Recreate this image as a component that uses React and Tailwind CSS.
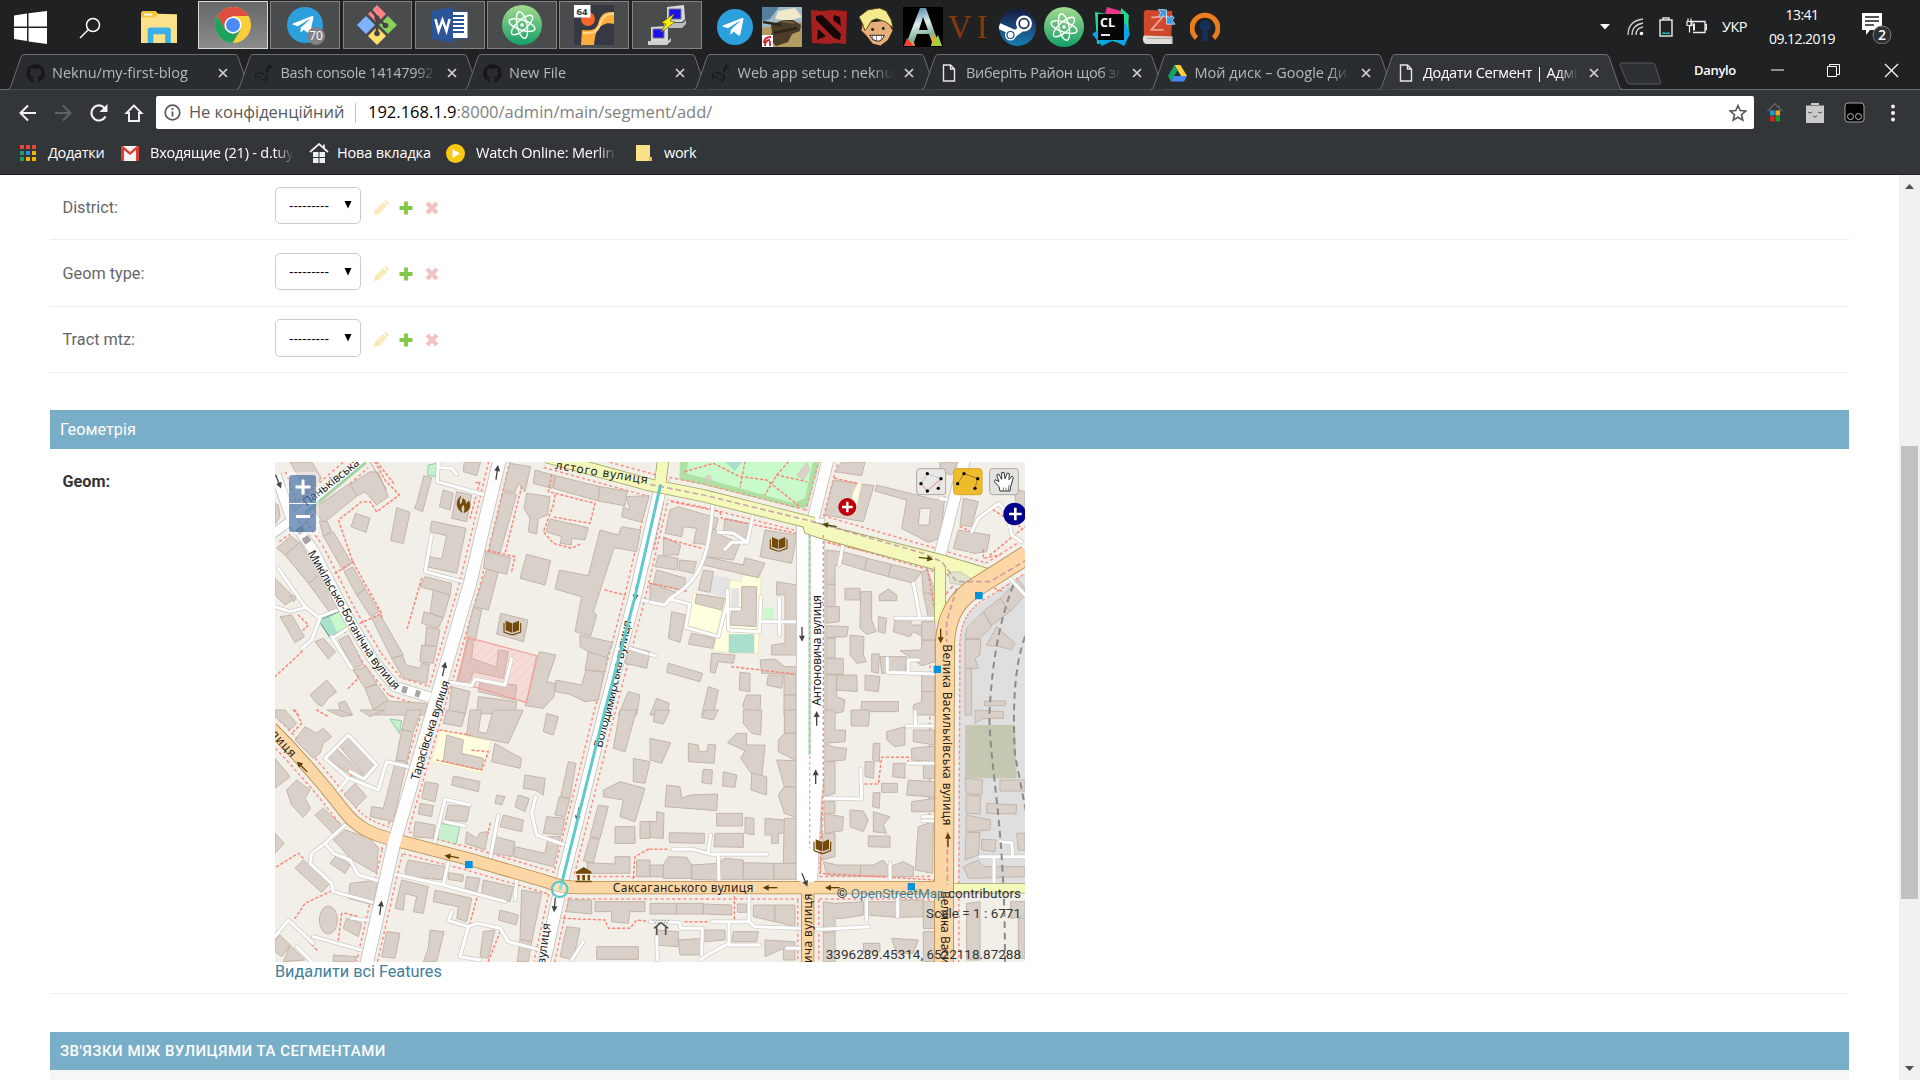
import React from 'react';
import { FaGithub, FaSteamSymbol, FaTelegramPlane } from 'react-icons/fa';

/* ------------------------------------------------------------------ icons */

const Svg = ({ s = 36, vb = '0 0 36 36', className = '', children }) => (
  <svg width={s} height={s} viewBox={vb} className={`block shrink-0 ${className}`} fill="none">
    {children}
  </svg>
);

const Telegram = () => (
  <div className="flex size-9 items-center justify-center rounded-full bg-[#2ca0dc] text-white">
    <FaTelegramPlane size={24} className="mr-1" />
  </div>
);

const Atom = ({ id }) => (
  <Svg s={40} vb="0 0 40 40">
    <defs>
      <linearGradient id={id} x1="0" y1="0" x2="0" y2="1">
        <stop offset="0" stopColor="#a3dc8f" />
        <stop offset="1" stopColor="#14a067" />
      </linearGradient>
    </defs>
    <circle cx="20" cy="20" r="20" fill={`url(#${id})`} />
    <g stroke="#fff" strokeWidth="1.400">
      <ellipse cx="20" cy="20" rx="13.500" ry="5" transform="rotate(18 20 20)" />
      <ellipse cx="20" cy="20" rx="13.500" ry="5" transform="rotate(78 20 20)" />
      <ellipse cx="20" cy="20" rx="13.500" ry="5" transform="rotate(138 20 20)" />
    </g>
    <circle cx="20" cy="20" r="1.800" fill="#fff" />
  </Svg>
);

const Chrome = () => (
  <Svg>
    <circle cx="18" cy="18" r="18" fill="#fbce3c" />
    <path d="M2.400 9A18 18 0 0 1 33.600 9H18L10.200 22.500Z" fill="#dd4d40" />
    <path d="M2.400 9A18 18 0 0 0 17.500 36L25.800 22.500 18 27 10.200 22.500Z" fill="#1fa160" />
    <circle cx="18" cy="18" r="8.600" fill="#fff" />
    <circle cx="18" cy="18" r="7" fill="#4a8af4" />
  </Svg>
);

const Explorer = () => (
  <Svg vb="0 0 36 32" s={37}>
    <path d="M0 2 1.500 0H14l2.500 2.500L35 3v28H0Z" fill="#fde08a" />
    <path d="M0 2 1.500 0H14l2.500 2.500L14 6H0Z" fill="#f5c636" />
    <path d="M3 2.500h8v1.800H3Z" fill="#fff" />
    <path d="M6.500 31V18.500q0-2.500 2.500-2.500h17.500q2.500 0 2.500 2.500V31h-5.500v-8.500H12V31Z" fill="#3bb0e8" />
  </Svg>
);

const GitBash = () => (
  <Svg s={40} vb="0 0 40 40">
    <path d="m20 0 9 9-9 9-9-9Z" fill="#f98284" />
    <path d="m9 11 9 9-9 9-9-9Z" fill="#80b3ff" />
    <path d="m31 11 9 9-9 9-9-9Z" fill="#87d05c" />
    <path d="m20 22 9 9-9 9-9-9Z" fill="#ffe06e" />
    <path d="M14 5 20 12v16M20 13l8 7" stroke="#454547" strokeWidth="2.600" />
    <circle cx="20" cy="13" r="2.600" fill="#454547" />
    <circle cx="28.500" cy="20.500" r="2.800" fill="#454547" />
    <circle cx="20" cy="28.500" r="2.800" fill="#454547" />
  </Svg>
);

const Word = () => (
  <Svg>
    <path d="M19 4.500h17v27H19Z" fill="#fff" stroke="#2a5599" />
    <path d="M20 9h12M20 13h12M20 17h12M20 21h12M20 25h12" stroke="#2a5599" strokeWidth="1.800" />
    <path d="M0 4 21 0v36L0 32Z" fill="#2a5599" />
    <path d="m3.500 12 3 12 4-11 4 11 3-12" stroke="#fff" strokeWidth="2.500" />
  </Svg>
);

const JetBrains = () => (
  <Svg s={40} vb="0 0 40 40">
    <rect width="40" height="40" rx="1" fill="#363944" />
    <circle cx="14" cy="14" r="7" fill="#f4672b" />
    <path d="M40 7C28 6 26 12 24 19 22 25 17 26 8 25L7 40h13c1-13 4-18 9-20 3-2 7-2 11-1Z" fill="#fbae3c" />
    <path d="M40 9C29 8 27 16 25 22 22 28 17 28 9 28" stroke="#ffd98c" strokeWidth="2" />
    <rect width="16.500" height="12.500" fill="#fff" />
    <text x="2.500" y="10" fontSize="9.500" fontWeight="700" fill="#333" fontFamily="Open Sans, sans-serif">64</text>
  </Svg>
);

const Putty = () => (
  <Svg s={40} vb="0 0 40 40">
    <path d="M20 2 37 0l1 14-3 3-15 0Z" fill="#d9d9d9" />
    <path d="M22 4h12v10H22Z" fill="#1b10f0" stroke="#777" />
    <path d="M17 18h19l3-3v4l-4 4H17Z" fill="#bcbcbc" />
    <path d="M4 22 21 21v15H4Z" fill="#d9d9d9" />
    <path d="M6 24h11v9H6Z" fill="#1b10f0" stroke="#777" />
    <path d="M1 36h20l3-3v3l-4 4H1Z" fill="#d1d1cc" />
    <path d="m28 8-14 10 5 1-6 9 15-11-5-1Z" fill="#fff200" stroke="#222" strokeWidth=".5" />
  </Svg>
);

const Tanks = () => (
  <Svg s={40} vb="0 0 40 40">
    <rect width="40" height="40" fill="#9fb9c6" />
    <path d="M0 0h17L8 12 0 14Z" fill="#547f9e" />
    <path d="m16 4 17-3 7 9-13 4-14-2Z" fill="#efe9cb" />
    <path d="M0 21 40 15v25H0Z" fill="#b39a5f" />
    <path d="m9 18 12-5 10 0 8 5-1 6-8 3-4 8-12 4-6-6 2-8Z" fill="#4a3c26" />
    <path d="m1 15 18 3M12 26l23-5" stroke="#2b2418" strokeWidth="2.500" />
    <path d="m20 14 12 2" stroke="#7d6b49" strokeWidth="1.500" />
    <rect y="28" width="11" height="12" fill="#fff" />
    <path d="M2 36q0-6 7-6M3 39q0-6 5-6M8 39v-5" stroke="#cb202b" strokeWidth="1.800" />
  </Svg>
);

const Dota = () => (
  <Svg>
    <path d="m0 1 12 1 7-1 17 1-1 33-10-1-9 1L1 34Z" fill="#a81f20" />
    <path d="m5 7 6-1 19 19-1 6-6-2L5 11ZM23 6l6 2 1 9-8-6ZM7 20l8 7-9 4Z" fill="#160808" />
  </Svg>
);

const Blond = () => (
  <Svg s={39} vb="0 0 36 40">
    <path d="M5 15 32 12l1 8 2 3-5 10-8 6-8-2-7-9-5-5 1-5Z" fill="#e6ae78" stroke="#33231a" />
    <path d="M0 9 9 2 21 0l7 3 5 9 2 8-8-6-9-3-5 2-5 8-2 2-2-6Z" fill="#f5e98e" stroke="#55471e" />
    <path d="M11 28h15q-2 6-7 6t-8-6Z" fill="#fff" stroke="#222" />
    <path d="M14 28v5m4-5v6m5-6v5" stroke="#555" strokeWidth=".7" />
    <circle cx="14" cy="22" r="1.500" fill="#222" />
    <circle cx="25" cy="21" r="1.500" fill="#222" />
  </Svg>
);

const Ark = () => (
  <Svg s={40} vb="0 0 40 40">
    <defs>
      <linearGradient id="ark" x1="0" y1="0" x2=".3" y2="1">
        <stop offset="0" stopColor="#2d6e99" />
        <stop offset=".5" stopColor="#e2eef0" />
        <stop offset=".8" stopColor="#83b69a" />
        <stop offset="1" stopColor="#f2a531" />
      </linearGradient>
    </defs>
    <rect width="40" height="40" fill="#000" />
    <path d="M17 1h6l11 31 5 7H28l1-4-3-8H14l-3 8 1 4H1l4-7Zm3 9-4 13h9Z" fill="url(#ark)" fillRule="evenodd" />
    <path d="m1 39 3-8 7 8Z" fill="#ee4436" />
    <path d="m39 39-4-11-7 11Z" fill="#a6cf3c" />
  </Svg>
);

const Steam = () => (
  <div className="flex size-[37px] items-center justify-center overflow-hidden rounded-full bg-linear-to-b from-[#131b42] to-[#137eb4] text-white">
    <Svg s={37} vb="0 0 37 37">
      <path d="M0 17 16 24M14 26 26 17" stroke="#fff" strokeWidth="6" />
      <circle cx="11.500" cy="26" r="5.500" fill="#fff" />
      <circle cx="11.500" cy="26" r="3.500" stroke="#1b4b84" strokeWidth="1.200" />
      <circle cx="25" cy="14.500" r="8" fill="#fff" />
      <circle cx="25" cy="14.500" r="4.800" fill="#fff" stroke="#1b2f60" strokeWidth="1.700" />
    </Svg>
  </div>
);

const CLion = () => (
  <Svg s={40} vb="0 0 40 40">
    <path d="m4 5 12 2L38 8l-4 30-12-4L6 37Z" fill="#22d88f" />
    <path d="m16 0 17 5-5 8-14-6Z" fill="#ea3989" />
    <path d="m30 1 7 6 1 19-9-12Z" fill="#21d789" />
    <path d="m1 27 10 12 12-6L9 22ZM34 15l5 12-6 12-9-5Z" fill="#0aa4e8" />
    <path d="M7 7h26v26H7Z" fill="#050505" />
    <text x="9" y="20" fontSize="12.500" fontWeight="700" fill="#fff" fontFamily="Open Sans, sans-serif">CL</text>
    <path d="M10 28h9" stroke="#fff" strokeWidth="1.800" />
  </Svg>
);

const Zotero = () => (
  <Svg s={36} vb="0 0 38 38">
    <path d="m6 1 28 1-1 28-29-1V3Z" fill="#d0482b" />
    <path d="m4 28 30 1v8H6q-5-3-2-9Z" fill="#e0dcd8" />
    <path d="M34 29v8M7 31h26" stroke="#a7a19b" />
    <path d="M12 9 24 8 12 22l13 0" stroke="#e9a18f" strokeWidth="2" />
    <path d="m19 0 9 1 0 9-3-3-3 2-2-2 2-3ZM37 16h-9V7l3 2 3-2 2 2-2 3Z" fill="#3f9be0" stroke="#cfe9fb" strokeWidth=".8" />
  </Svg>
);

const Keyhole = () => (
  <Svg s={30} vb="0 0 30 30">
    <path d="M6.500 26A13 13 0 1 1 23.500 26" stroke="#ec7d1f" strokeWidth="5" />
    <circle cx="15" cy="14" r="5.500" fill="#15315b" />
    <path d="M13 17h4l1.500 12h-7Z" fill="#15315b" />
  </Svg>
);

const FileIcon = () => (
  <Svg s={18} vb="0 0 18 18">
    <path d="M3.500 1h7l4 4v12h-11ZM10.500 1v4h4" stroke="#e6e6e6" strokeWidth="1.400" />
  </Svg>
);

const Snake = () => (
  <Svg s={20} vb="0 0 20 20">
    <path d="M3 10Q1 13 2 16M4 9l6 2M12 11q2 5-1 8M16 0l-2 5q-3 3 0 4M14 6l4-3" stroke="#131516" strokeWidth="1.200" />
    <circle cx="5" cy="14" r="1" fill="#131516" />
    <path d="M7 17q3 1 4-2" stroke="#131516" />
  </Svg>
);

const Drive = () => (
  <Svg s={19} vb="0 0 19 17">
    <path d="M6.500 0h6L19 11h-6Z" fill="#fdcd40" />
    <path d="M6.500 0 0 11l3 5.500L9.500 5.500Z" fill="#11a35f" />
    <path d="M3 16.500 6 11h13l-3 5.500Z" fill="#4688f4" />
  </Svg>
);

/* ---------------------------------------------------------------- taskbar */

const RUNNING = [
  { key: 'chrome', icon: <Chrome />, active: true },
  { key: 'telegram', icon: <Telegram />, badge: '70' },
  { key: 'git', icon: <GitBash /> },
  { key: 'word', icon: <Word /> },
  { key: 'atom', icon: <Atom id="atomA" /> },
  { key: 'jb', icon: <JetBrains /> },
  { key: 'putty', icon: <Putty /> },
];

const PINNED = [
  <Telegram />,
  <Tanks />,
  <Dota />,
  <Blond />,
  <Ark />,
  <span className="font-['Liberation_Serif',serif] text-[33px] leading-none tracking-[5px] text-[#843a0b]">VI</span>,
  <Steam />,
  <Atom id="atomB" />,
  <CLion />,
  <Zotero />,
  <Keyhole />,
];

function Taskbar() {
  return (
    <div className="flex h-[53px] items-start bg-[#1f2123] text-white">
      <div className="flex w-[198px] items-center pt-[9px] pl-3.5">
        <Svg s={33} vb="0 0 33 33">
          <path d="m0 4.500 13-2v13H0ZM14.500 2.300 33 0v15.500H14.500ZM0 17h13v13L0 28ZM14.500 17H33v16l-18.500-2.500Z" fill="#fff" />
        </Svg>
        <Svg s={22} vb="0 0 22 22" className="ml-8">
          <circle cx="14" cy="8" r="6.500" stroke="#fff" strokeWidth="1.500" />
          <path d="M9.500 12.500 1 21" stroke="#fff" strokeWidth="1.500" />
        </Svg>
        <div className="ml-10">
          <Explorer />
        </div>
      </div>
      <div className="flex gap-[2.500px] pt-px">
        {RUNNING.map((r) => (
          <div
            key={r.key}
            className={`relative flex h-12 w-[69.800px] items-center justify-center border ${
              r.active ? 'border-[#d8d8d8] bg-linear-to-b from-[#666769] to-[#8b8c8e]' : 'border-[#838485] bg-[#4a4b4d]'
            }`}
          >
            {r.icon}
            {r.badge && (
              <span className="absolute right-[14px] bottom-[3px] flex size-[18px] items-center justify-center rounded-full bg-[#808285] font-['Open_Sans',sans-serif] text-[12px]">
                {r.badge}
              </span>
            )}
          </div>
        ))}
      </div>
      <div className="ml-[10px] flex pt-[7px]">
        {PINNED.map((icon, i) => (
          <div key={i} className="flex h-10 w-[47px] items-center justify-center">
            {icon}
          </div>
        ))}
      </div>
      <div className="ml-auto flex h-[53px] items-center font-['Open_Sans',sans-serif] text-[14.500px]">
        <Svg s={10} vb="0 0 10 6">
          <path d="M0 0h10L5 5.500Z" fill="#fff" />
        </Svg>
        <Svg s={18} vb="0 0 18 18" className="ml-[17px]">
          <path d="M1 17Q1 3 16 1M5 17Q5 7 16 5M9 17q0-7 7-8" stroke="#cfcfcf" strokeWidth="1.300" />
          <circle cx="14.500" cy="15.500" r="1.800" fill="#fff" />
        </Svg>
        <Svg s={20} vb="0 0 20 20" className="ml-[11px]">
          <path d="M7 1h6v2H7ZM4 3h12v16H4Z" stroke="#e0e0e0" strokeWidth="1.500" />
          <path d="m6 16 2-1 2 1 2-1 2 1v1H6Z" fill="#18b9bd" />
        </Svg>
        <Svg s={21} vb="0 0 21 16" className="ml-[10px]">
          <path d="M5 8V3h14v11H7M19 6h1.500v5H19" stroke="#eee" strokeWidth="1.300" />
          <path d="M1 3h5v4H1ZM2 0v3m3-3v3M3.500 7v7" stroke="#eee" strokeWidth="1.200" />
          <path d="M7 5h2v7H7Z" fill="#eee" />
        </Svg>
        <span className="ml-[15px] w-[28px] text-[14.500px] tracking-[-0.500px]">УКР</span>
        <div className="ml-[14px] w-[76px] text-center text-[14px] leading-6 tracking-[-0.550px]">
          <div>13:41</div>
          <div>09.12.2019</div>
        </div>
        <div className="relative mr-[26px] ml-[20px] size-[34px]">
          <Svg s={34} vb="0 0 34 34">
            <path d="M2 3h20v17H10l-4 5v-5H2Z" fill="#fff" />
            <path d="M5 7h14M5 11h14M5 15h9" stroke="#1f2123" strokeWidth="1.500" />
            <circle cx="22" cy="25" r="9" fill="#2f3133" stroke="#7c7c7c" />
          </Svg>
          <span className="absolute top-[16px] left-[18px] text-[14px] leading-[18px] font-semibold">2</span>
        </div>
      </div>
    </div>
  );
}

/* ---------------------------------------------------------- browser frame */

const LATIN = 'tracking-[0.020px]';
const CYRILLIC = 'tracking-[-0.300px]';

const TABS = [
  { icon: <FaGithub size={19} color="#151718" />, title: 'Neknu/my-first-blog', fit: LATIN },
  { icon: <Snake />, title: 'Bash console 14147992', fit: CYRILLIC },
  { icon: <FaGithub size={19} color="#151718" />, title: 'New File', fit: LATIN },
  { icon: <Snake />, title: 'Web app setup : neknu', fit: LATIN },
  { icon: <FileIcon />, title: 'Виберіть Район щоб зм', fit: CYRILLIC },
  { icon: <Drive />, title: 'Мой диск – Google Ди', fit: LATIN },
  { icon: <FileIcon />, title: 'Додати Сегмент | Адмі', fit: CYRILLIC, active: true },
];

function Tab({ icon, title, active, fit }) {
  return (
    <div className={`relative h-9 w-[228.500px] shrink-0 ${active ? 'z-10' : ''}`}>
      <svg className="absolute top-0 left-0" width="244" height="37" viewBox="0 0 244 37">
        <path
          d="M0 36.500 C2 36 3 33 4 30L13 4Q14 1.500 16 1.500H227Q229 1.500 230 4L240 33Q241 36.500 244 36.500Z"
          fill={active ? '#323639' : '#292d30'}
        />
        <path
          d="M0 36.500 C2 36 3 33 4 30L13 4Q14 1.500 16 1.500H227Q229 1.500 230 4L240 33Q241 36.500 244 36.500"
          fill="none"
          stroke="#6c6f71"
        />
      </svg>
      <div className="relative flex h-full items-center pt-1 pl-[17px] font-['Open_Sans',sans-serif] text-[14.500px]">
        <span className="flex w-[20px] justify-center">{icon}</span>
        <span
          className={`ml-[7px] w-[155px] overflow-hidden whitespace-nowrap mask-[linear-gradient(to_right,black_87%,transparent)] ${fit} ${
            active ? 'text-white' : 'text-[#b6b9bb]'
          }`}
        >
          {title}
        </span>
        <Svg s={10} vb="0 0 10 10" className="ml-[11px]">
          <path d="m1 1 8 8M9 1 1 9" stroke="#d4d4d4" strokeWidth="1.700" />
        </Svg>
      </div>
    </div>
  );
}

function TabStrip() {
  return (
    <div className="relative flex h-[37px] items-start border-b border-[#6c6f71] bg-[#1f2123] pl-2">
      {TABS.map((t) => (
        <Tab key={t.title} {...t} />
      ))}
      <Svg s={44} vb="0 0 44 24" className="mt-[-2px] ml-[11px]">
        <path d="M2 2h31q2 0 3 2l6 18q0 1-2 1H11q-2 0-3-2L1 4Q1 2 2 2Z" fill="#2d3134" stroke="#56595b" />
      </Svg>
      <div className="ml-auto flex items-center pt-2 pr-[21px] font-['Open_Sans',sans-serif] text-[13px] text-white">
        <span className="font-semibold tracking-[-0.300px]">Danylo</span>
        <Svg s={15} vb="0 0 15 15" className="ml-[34px]">
          <path d="M1 7h13" stroke="#fff" />
        </Svg>
        <Svg s={15} vb="0 0 15 15" className="ml-[41px]">
          <path d="M1.500 3.500h9v10h-9ZM3.500 3V1.500h10v10H11" stroke="#fff" />
        </Svg>
        <Svg s={15} vb="0 0 15 15" className="ml-[43px]">
          <path d="m1 1 13 13M14 1 1 14" stroke="#fff" strokeWidth="1.200" />
        </Svg>
      </div>
    </div>
  );
}

function Toolbar() {
  return (
    <div className="flex h-[47px] items-center bg-[#323639] pb-[2px] font-['Open_Sans',sans-serif]">
      <div className="flex w-[156px] items-center pl-[18px]">
        <Svg s={20} vb="0 0 20 20">
          <path d="M18 10H3M10 2.500 2.500 10l7.500 7.500" stroke="#f2f2f2" strokeWidth="2" />
        </Svg>
        <Svg s={20} vb="0 0 20 20" className="ml-[15px]">
          <path d="M2 10h15M10 2.500l7.500 7.500-7.500 7.500" stroke="#5f6366" strokeWidth="2" />
        </Svg>
        <Svg s={20} vb="0 0 20 20" className="ml-[16px]">
          <path d="M16.500 13.500A7.500 7.500 0 1 1 15.500 5" stroke="#f2f2f2" strokeWidth="2.200" />
          <path d="M18.500 1v8h-8Z" fill="#f2f2f2" />
        </Svg>
        <Svg s={20} vb="0 0 20 20" className="ml-[15px]">
          <path d="M10 2.500 2.500 10H5v8h10v-8h2.500Z" stroke="#f2f2f2" strokeWidth="1.900" />
        </Svg>
      </div>
      <div className="flex h-[33px] w-[1598px] items-center rounded-xs bg-white pl-[8px] text-[16.500px] whitespace-nowrap">
        <Svg s={17} vb="0 0 17 17">
          <circle cx="8.500" cy="8.500" r="7.300" stroke="#5a5a5a" strokeWidth="1.700" />
          <path d="M8.500 7.500v5M8.500 4v2" stroke="#5a5a5a" strokeWidth="1.800" />
        </Svg>
        <span className="ml-2 w-[166px] tracking-[-0.050px] text-[#5a5a5a]">Не конфіденційний</span>
        <span className="h-5 w-px bg-[#c4c4c4]" />
        <span className="ml-[12px] text-[#808080]">
          <span className="text-black">192.168.1.9</span>:8000/admin/main/segment/add/
        </span>
        <Svg s={18} vb="0 0 18 18" className="mr-[7px] ml-auto">
          <path d="m9 1.500 2.200 5 5.500.500-4.200 3.700 1.300 5.500L9 13.300l-4.800 2.900 1.300-5.500L1.300 7l5.500-.500Z" stroke="#555" strokeWidth="1.600" />
        </Svg>
      </div>
      <Svg s={20} vb="0 0 20 24" className="ml-[11px]">
        <path d="m1 10 9-9 9 9M15 3v4" stroke="#64605f" strokeWidth="1.800" />
        <rect x="4" y="9" width="5.500" height="6" fill="#1e9bd7" />
        <rect x="10.500" y="9" width="5.500" height="6" fill="#fba90a" />
        <rect x="4" y="16" width="5.500" height="6" fill="#e2231a" />
        <rect x="10.500" y="16" width="5.500" height="6" fill="#0aa52c" />
      </Svg>
      <Svg s={20} vb="0 0 20 20" className="ml-[20px]">
        <path d="M6 0h8v2H6ZM1 2.500h18V20H1Z" fill="#c9caca" />
        <path d="M3 9q2 2 4 0m6 0q2 2 4 0M8 13q2 2 4 0" stroke="#555" />
      </Svg>
      <Svg s={21} vb="0 0 21 21" className="ml-[19px]">
        <rect x="1" y="1" width="19" height="19" rx="3" fill="#050505" stroke="#a3a3a3" />
        <circle cx="6.500" cy="14.500" r="3" stroke="#bbb" />
        <circle cx="14.500" cy="14.500" r="3" stroke="#bbb" />
      </Svg>
      <Svg s={20} vb="0 0 20 20" className="ml-[18px]">
        <circle cx="10" cy="3.500" r="2" fill="#f2f2f2" />
        <circle cx="10" cy="10" r="2" fill="#f2f2f2" />
        <circle cx="10" cy="16.500" r="2" fill="#f2f2f2" />
      </Svg>
    </div>
  );
}

const APPS = ['#e8453c', '#e8453c', '#e8453c', '#1fa160', '#2d8cf0', '#f4b400', '#1fa160', '#f4b400', '#f4b400'];

function Bookmarks() {
  return (
    <div className="flex h-[38px] items-center border-b border-[#1f2224] bg-[#323639] pb-[5px] pl-5 font-['Open_Sans',sans-serif] text-[14.500px] whitespace-nowrap text-white">
      <div className="grid size-4 grid-cols-3 gap-[2px]">
        {APPS.map((c, i) => (
          <span key={i} style={{ background: c }} />
        ))}
      </div>
      <span className="ml-3 w-[73px] tracking-[-0.300px]">Додатки</span>
      <Svg s={18} vb="0 0 18 16">
        <rect width="18" height="15" y="1" fill="#f3f3f3" />
        <path d="M0 1v15h3V5l6 5 6-5v11h3V1h-2L9 7 2 1Z" fill="#d93f35" />
      </Svg>
      <span className="ml-[11px] w-[144px] overflow-hidden tracking-[-0.200px] mask-[linear-gradient(to_right,black_87%,transparent)]">
        Входящие (21) - d.tuy
      </span>
      <Svg s={20} vb="0 0 20 20" className="ml-[15px]">
        <path d="m1 9 9-8 9 8M15 1.500V6" stroke="#eee" strokeWidth="1.700" />
        <path d="M4 9h5.500v5H4ZM10.500 9H16v5h-5.500ZM4 15h5.500v5H4ZM10.500 15H16v5h-5.500Z" fill="#eee" />
      </Svg>
      <span className="ml-2 w-[109px] tracking-[-0.150px]">Нова вкладка</span>
      <Svg s={19} vb="0 0 19 19">
        <circle cx="9.500" cy="9.500" r="9.500" fill="#fbc913" />
        <path d="m6.500 5 7.500 4.500L6.500 14Z" fill="#fff" />
      </Svg>
      <span className="ml-[11px] w-[140px] overflow-hidden tracking-[-0.170px] mask-[linear-gradient(to_right,black_87%,transparent)]">
        Watch Online: Merlin
      </span>
      <Svg s={18} vb="0 0 18 18" className="ml-[19px]">
        <path d="M1 1h14v12h2v4H1Z" fill="#fbe08a" />
        <path d="M14 13h3v4h-3Z" fill="#e9bf45" />
      </Svg>
      <span className="ml-[11px] tracking-[-0.300px]">work</span>
    </div>
  );
}

/* -------------------------------------------------------------------- map */

/* Four map tiles; every entry lists building outlines in tile coordinates. */
const BUILDINGS = {
  a: `60,21 125,21 155,70 110,110|130,160 240,85 262,122 160,205|240,88 300,50 325,52 355,125 320,150 285,110 262,122|300,21 350,105 325,60|440,145 462,62 485,68 458,170 433,160|508,155 520,105 550,115 540,165|545,190 560,110 605,120 590,200|580,50 583,21 632,21 620,62|243,215 257,175 300,190 288,232|362,257 380,158 420,172 400,265|485,198 588,220 560,355 470,335 480,305 515,312 530,242 480,230|148,198 172,200 185,228 160,243|160,243 190,230 245,325 218,345|222,350 248,335 286,400 260,420|260,420 286,402 328,470 302,485|305,490 330,478 400,600 365,610|365,610 398,602 408,630 450,640 455,625 478,628 470,685 400,670|20,280 62,243 88,262 45,300|45,300 90,262 150,360 115,385|115,385 150,360 212,460 185,480|15,370 75,430 45,450 15,420|30,485 65,480 103,545 75,563|135,560 160,550 197,590 175,612|205,555 235,540 280,630 250,640|450,395 465,365 545,385 540,420|490,405 540,420 520,488 480,475|462,470 520,488 505,520 455,505|470,515 510,525 500,575 465,570|455,570 500,575 490,625 450,620|250,645 290,635 320,685 285,700|285,700 320,688 355,735 310,765|120,720 170,675 200,710 175,730 155,755 140,745|205,745 225,738 248,780 215,780|310,765 350,738 470,745 465,780 315,780|545,695 600,710 585,780 535,780|625,725 740,740 735,780 620,775|720,25 782,35 765,110 745,85 735,112 700,105|700,110 740,118 690,295 657,285|648,290 722,308 710,358 640,340|650,342 685,352 655,465 612,455|610,457 635,465 615,560 588,550|770,298 842,317 825,390 750,370|692,475 774,495 760,560 680,537|795,45 857,62 845,100 790,85|857,62 990,95 985,138 850,100|990,95 1072,108 1065,152 985,138|1068,125 1138,122 1115,202 1055,185 1060,155 1080,165|770,115 840,125 832,180 805,190 800,237 775,230 780,190 762,160|840,192 955,218 945,255 905,250 905,270 870,265 875,245 828,230|990,225 1045,240 1055,215 1112,225 1100,290 1032,278 970,470 980,480 962,543 915,530 935,425 855,402 868,345 955,362|930,540 1028,562 1010,610 955,590 930,575|955,590 1013,608 1005,650 945,645|808,590 858,600 830,680 855,685 852,725 820,760 765,752|858,675 935,690 948,645 1003,652 985,735 945,740 900,718 855,710|590,555 610,565 605,610 680,637 685,585 715,590 700,670 610,650 600,680 565,680|630,680 740,690 735,735 625,710|1075,710 1110,720 1100,780 1045,780|1080,575 1140,590 1130,640 1065,625|15,145 25,150 30,185 15,208|60,425 80,420 72,440`,
  b: `60,165 85,155 205,190 185,270 130,265 140,220 100,215 95,245 45,235|40,245 92,270 85,300 40,300|25,300 85,310 80,345 15,335|90,315 140,320 130,355 85,345|20,345 108,370 100,408 10,385|0,385 75,410 50,450 0,440|225,190 295,205 290,250 220,235|190,220 210,240 270,265 250,315 165,305|165,305 280,330 285,308 345,325 325,368 160,330|345,225 440,240 425,325 330,305|160,345 190,350 180,412 145,405|140,417 223,430 215,465 135,445|275,395 320,395 318,515 240,510 245,470 275,465|65,470 108,480 90,562 55,550|125,535 195,550 188,580 115,567|380,380 440,390 440,600 365,600 365,570 405,565 405,420 380,420|185,595 255,600 250,625 205,620 195,655 180,650|55,625 158,655 150,680 50,652|270,652 300,655 300,710 268,705|330,615 375,612 405,635 440,635 440,655 335,655|355,660 400,660 395,700 350,690|402,655 438,660 438,720 402,720|402,720 438,720 438,780 402,780|175,695 205,705 190,780 155,780|290,720 332,720 330,780 290,780 278,750|20,730 58,745 50,780 0,780|575,21 645,21 635,62 555,50|550,75 672,92 640,200 525,180|680,90 860,135 885,125 870,250 835,262 755,220 770,135 675,108|528,285 572,290 565,330 555,332 555,388 528,388|528,388 555,388 555,455 528,455|528,455 568,455 568,500 528,505|528,512 595,515 590,545 528,548|528,550 555,550 555,610 528,610|528,610 580,610 580,658 528,658|528,658 560,660 560,725 585,735 580,770 528,780|580,290 652,310 642,345 575,325|652,310 725,328 715,365 642,345|725,328 815,350 790,385 715,365|815,350 832,345 858,415 820,415|820,415 858,415 855,490 835,490|585,400 630,400 630,435 585,435|632,410 665,410 665,495 678,530 650,538 630,520|688,420 715,402 740,420 740,437 688,437|685,485 710,490 705,535 685,530|735,495 780,490 785,510 820,510 820,545 790,530 780,545 730,530|600,540 642,545 640,600 650,620 620,625 600,600|665,597 688,597 685,655 665,650|690,605 770,605 765,650 695,655|560,660 620,660 622,710 560,705|645,660 690,665 685,710 645,705|815,500 855,500 855,555 815,555|750,587 815,585 815,557 855,557 855,620 815,632 770,600|815,660 855,660 855,710 815,710|790,750 815,740 815,710 855,710 855,780 790,780|635,740 745,740 745,770 632,770|870,21 925,21 905,60 870,50|940,130 985,140 965,215 930,210|925,225 1020,240 1010,290 975,295 910,280|1003,738 1067,738 1067,752 1003,752|1090,100 1125,110 1125,160 1100,150`,
  bRail: `1000,470 1050,430 1080,470 1025,510|1050,430 1105,375 1125,400 1125,420 1080,470|950,520 1000,470 1025,515 990,550 945,550|945,553 992,553 990,600 975,610 985,640 945,640|945,640 965,640 965,780 945,780|1010,570 1040,515 1095,565 1085,585 1050,575`,
  c: `15,0 45,0 80,40 60,60 15,20|75,90 105,50 140,70 160,55 185,80 160,100 150,130 130,145|170,0 210,0 245,15 215,20|270,0 345,0 300,20|410,0 455,0 430,65 395,60|395,60 430,65 410,155 378,150|378,150 410,155 370,335 300,320 305,290 340,295|15,145 60,200 15,235|50,240 80,210 120,240 105,265 122,295 100,322 65,285|170,145 195,112 235,150 285,205 250,200|210,110 235,80 320,165 285,200|222,255 255,220 290,260 258,292|135,315 160,295 215,345 190,372|190,390 225,360 300,385 325,415 320,490 240,445 215,415|180,460 200,435 240,465 225,490|15,370 42,400 15,430|75,475 100,450 180,520 155,547|240,520 325,510 310,585 235,565|220,655 230,625 275,640 265,680|15,690 30,675 60,705 35,740 15,725|60,705 105,750 40,755|350,665 390,670 375,745 335,740|190,735 260,740 255,755 190,755|415,450 525,470 520,510 410,500 405,480|395,510 475,530 460,610 430,605 440,560 405,550 400,600 375,595|495,540 605,565 590,635 560,625 565,590 490,575|535,488 580,495 578,515 535,508|590,500 630,505 620,545 585,535|640,510 730,530 720,575 635,550|755,540 815,550 785,695 750,688|750,688 785,695 775,755 742,755|690,600 745,615 738,645 685,630|480,660 522,665 500,755 460,755 475,715|640,665 675,660 655,745 630,740|530,0 585,10 575,50 520,40|600,0 635,0 625,65 650,70 670,0 760,0 715,100 590,75|675,100 700,115 755,145 750,175 665,155|530,75 580,90 575,130 640,145 635,180 520,155|830,10 865,20 850,75 820,65|550,198 630,215 625,245 545,225|465,215 505,222 495,275 455,265|450,280 490,287 485,320 445,312|535,285 600,290 590,335 525,330|435,335 495,345 490,385 430,380|590,365 620,385 630,368 655,365 645,420 585,400|700,315 760,330 755,365 690,350|680,255 705,260 695,285 675,280|745,255 778,265 765,305 735,290|765,195 825,205 820,255 795,240 760,235|675,380 735,395 725,440 670,430|895,155 918,160 900,265 872,260|868,260 900,267 885,320 855,315|830,320 885,325 875,375 820,370|735,410 825,430 835,380 872,380 850,470 730,440|1050,0 1100,0 1065,125 1030,115|1090,145 1140,155 1125,220 1090,215|1000,240 1050,215 1125,235 1095,335 1050,320 1060,270 1000,260|985,285 1015,290 990,385 960,380|960,383 988,388 970,458 940,452|1035,350 1095,350 1095,400 1035,400|950,458 1035,462 1035,440 1080,440 1080,490 955,490|1100,450 1140,450 1140,500 1100,500|895,570 965,570 965,612 890,605|975,575 1125,575 1125,605 1080,605 1075,640 1025,635 1025,605 975,605|890,650 930,655 910,750 870,740|980,710 1105,710 1105,748 980,748|1110,335 1140,335 1140,385 1110,385`,
  d: `15,0 60,0 40,42 10,35|165,0 205,0 190,30 155,22|0,85 62,98 35,160 0,150|115,100 145,105 147,125 170,125 175,103 197,105 192,160 115,155|280,0 335,0 332,75 305,70 280,40|232,98 260,70 290,70 290,105 345,105 335,205 300,185 272,145 285,122|160,178 187,180 185,222 155,218|220,185 260,195 255,232 218,228|305,190 350,200 350,255 303,240|50,225 90,230 95,265 120,255 203,252 200,302 45,290|200,310 277,310 277,348 200,348|285,322 312,325 312,375 285,370|0,335 20,335 20,305 42,310 40,385 0,382|58,368 163,370 163,400 58,398|195,370 280,370 280,412 192,410|345,325 405,330 410,370 385,370 385,400 365,400 365,375 345,375|403,0 438,0 438,70 403,70|385,90 403,70 438,70 438,152 385,125|380,150 438,152 438,232 403,230|385,255 403,230 438,232 438,322 403,310|403,325 438,325 438,460 400,460|0,465 40,465 40,500 0,500|40,465 55,440 110,442 125,465 125,505 40,505|125,465 205,460 205,510 125,508|205,460 225,445 280,450 280,508 205,508|280,458 372,460 372,508 280,508|372,460 438,460 438,508 372,508|522,0 555,0 555,60 587,60 585,95 522,100|522,100 555,112 590,115 585,150 522,155|522,155 555,155 555,250 522,260|522,275 555,275 555,310 522,310|522,312 580,320 578,362 525,370|517,370 555,370 555,440 517,450|520,455 560,465 632,465 632,500 530,495|632,465 670,465 700,450 715,470 715,498 632,498|720,470 760,455 790,470 790,500 720,500|603,0 660,0 655,48 603,48|710,65 765,50 765,105 735,110 710,90|670,100 690,100 688,155 668,150|645,155 673,155 670,205 645,200|730,160 765,160 765,205 728,200|695,220 742,220 742,247 695,247|670,248 690,248 688,295 668,290|600,300 640,303 655,330 640,365 600,350|670,305 720,320 700,345 710,370 670,365|655,378 720,378 720,412 655,410|790,60 855,60 855,105 790,95|785,115 855,108 855,155 785,150|820,160 855,160 855,205 820,205|775,210 855,215 855,262 770,255|785,275 855,265 855,305 785,305|805,350 850,335 848,490 795,480|0,580 80,580 80,612 0,612|80,580 160,580 160,612 80,612|160,582 245,585 245,615 160,612|262,582 290,582 290,607 262,607|310,585 375,585 375,635 310,620|375,585 435,585 435,650 375,635|165,660 225,660 225,690 165,695|250,665 325,665 320,695 245,695|20,660 85,665 85,710 15,705|85,690 155,685 150,735 90,735|345,690 435,695 435,750 400,750 400,715 345,740|520,575 555,580 640,575 640,615 580,625 555,625 555,667 520,667|520,667 555,667 555,755 520,755|655,575 740,575 740,622 655,615|745,570 820,570 820,620 745,622|820,575 855,575 855,655 820,655|820,665 855,665 855,755 820,755|640,700 690,700 690,725 640,725|725,685 805,690 790,730 740,730|950,580 990,575 990,750 950,750|1082,575 1125,575 1125,620 1082,625|1105,625 1125,625 1125,745 1105,745`,
  dRail: `945,205 998,210 995,255 948,250|948,255 992,258 990,312 948,310|948,315 1022,330 1020,360 948,365|948,367 990,367 985,435 945,450|1000,470 1125,470 1125,500 955,505 940,470 985,450|1050,210 1125,210 1125,243 1050,243|1010,280 1100,285 1098,312 1010,310|995,388 1038,390 1035,425 995,420|1100,370 1125,370 1125,420 1105,420|975,0 1060,5 1060,25 1000,25 975,40`,
};

const OFFSET = { a: '', b: 'translate(1140 0)', c: 'translate(0 765)', d: 'translate(1140 765)' };

const SERVICE = {
  a: 'M505,21 502,80 645,120M510,38 545,40 560,58M485,240 465,350 580,380M25,340 105,455 150,490 125,555 95,580M15,455 60,470 105,458M150,485 215,460M185,545 245,640M195,545 240,515M530,680 605,692 615,672 705,690 725,610M1095,432 1140,440M1080,580 1140,598M15,225 75,178',
  b: 'M188,145C180,300 150,380 60,430L45,450 0,442M60,432 120,448M120,448 107,517 205,545 232,440M232,405 235,525 328,530 333,425M230,462 268,462M335,500 440,500M388,430 388,540M310,175 292,262 245,262 225,283M292,262 250,235 205,232M580,262 568,330M790,385 810,490M735,490 855,490M712,610 712,652 855,657M775,655 775,615 805,615M965,230 985,190 1045,145 1070,170 1085,240 1115,260M870,130 920,140M1075,365 1125,420M0,598 18,602',
  c: 'M195,252 235,205 165,145 235,75 320,165 282,207 240,185M240,205 325,240 350,155 415,170M225,345 165,400 125,430 120,460 185,520 190,545 320,580M165,400 190,430 240,450 265,495 330,513M372,492 520,525 705,575M520,525 535,455M492,405 525,268 600,285M525,335 585,348M660,450 685,315M797,260 785,310 800,375 885,405M740,510 735,570M545,605 535,632 595,650 570,740 630,750M595,650 620,640 690,655 715,695 805,718M15,680 55,630 130,700M130,680 280,722M245,625 305,632M80,710 125,755M905,750 940,695',
  d: 'M68,418 130,418 185,433 350,433M175,425 182,375M205,435 207,515M515,265 635,267 632,178M720,460 720,520M795,5 797,48 770,48 855,48M775,160 855,160M818,320 855,320M818,332 855,332M297,545 297,635 315,650 520,658 655,650M185,635 297,635M237,640 237,700 180,730 150,750M237,705 330,705M90,640 92,655 157,655 155,735M0,635 85,637M650,560 650,630M743,560 743,620M20,680 22,750M990,440 1125,440M1050,395 1085,398 1088,438M1032,440 1032,520M410,715 450,715',
};

const PATHS = {
  a: 'M315,21 345,75 388,120 320,170 300,140 275,140 205,195 248,320 335,475 335,495M195,355 250,320M455,370 412,520M270,505 335,475M320,21 375,90M755,95 705,295M640,285 735,305 725,350M845,60 835,110 975,145 960,205 845,185M855,120 850,150 820,230 850,265 905,280 935,265M1005,405 1065,420M15,665 85,600 100,585M85,480 115,510 100,525M235,700 265,670 260,655M600,190 630,80 610,85M70,765 85,780',
  b: 'M65,140 210,170 215,190 440,235M40,145 10,290M45,250 155,280M0,385 110,408M245,635 440,658M555,70 620,85M520,260 830,330 855,470M105,50 190,25 270,65 350,75 450,155M285,21 270,95M415,21 380,60 345,120M380,60 470,80M1020,300 1125,215M1030,165 1110,215M1000,285 1000,310 1050,300M930,215 965,230M1020,395 1060,410',
  c: 'M75,0 95,40 70,65M20,470 85,430 105,450M75,625 105,580 180,545M215,610 205,690M225,610 265,620M85,660 145,725M620,565 600,640M690,665 655,755M880,625 1005,630 1015,655 1080,655 1100,630 1140,635M1090,505 1095,440 1140,415M500,150 635,180 655,125 600,120M510,60 600,75M660,340 655,370M140,0 175,20M235,180 250,210',
  d: 'M645,222 685,222 695,142 775,142 775,160M0,418 60,418M105,635 175,635M253,560 253,630M515,290 510,490 855,510M1065,580',
};

const OneWay = ({ x, y, r = 0, c = '#444' }) => (
  <g transform={`translate(${x} ${y}) rotate(${r})`}>
    <path d="M-22 0H8" stroke={c} strokeWidth="4" />
    <path d="M22 0 4-9V9Z" fill={c} />
  </g>
);

const Book = ({ x, y }) => (
  <g transform={`translate(${x} ${y})`} fill="#734a08">
    <path d="M-20-20-1-12V16l-19-7ZM20-20 1-12V16l19-7Z" />
    <path d="M-25-13V14L-4 22H4L25 14V-13" fill="none" stroke="#734a08" strokeWidth="3.500" />
  </g>
);

const ROADS = {
  taras: 'M690,10 600,385 485,780 372,1165 290,1525',
  volod: 'M1178,70 1095,425 1000,785 870,1305 822,1525',
  mykil: 'M18,60 65,195 130,285 230,480 310,615 375,695 480,727',
  pank: 'M10,235 65,195 275,15',
  saks: 'M5,820C90,905 170,1000 220,1065 260,1120 310,1140 375,1155L600,1213 830,1280Q870,1297 930,1298H2030',
  vasyl: 'M2022,1525V1300L2025,560C2030,470 2070,425 2120,395L2270,300',
  tolst: 'M830,5 1140,90 1300,122 1630,205',
  tolst2: 'M1600,200 2030,325 2170,365',
};

const halo = (w) => ({ fill: 'none', strokeWidth: w, strokeLinejoin: 'round' });

function CityMap() {
  const tiles = ['a', 'b', 'c', 'd'];
  const polys = (key) => BUILDINGS[key].split('|').map((p, i) => <polygon key={i} points={p} />);
  return (
    <svg width="750" height="500" viewBox="15 21 2250 1500" className="block">
      <defs>
        <pattern id="hatch" width="20" height="20" patternUnits="userSpaceOnUse" patternTransform="rotate(45)">
          <path d="M0 0V20" stroke="#f2b3ae" strokeWidth="3" />
        </pattern>
        <path id="l1" d="M112,295C150,360 200,440 225,490 265,570 320,650 380,712" />
        <path id="l2" d="M446,978 480,860 540,680" />
        <path id="l3" d="M995,880 1030,750 1085,495" />
        <path id="l4" d="M1652,752V400" />
        <path id="l5" d="M2018,568V1130" />
        <path id="l6" d="M2012,1308V1540" />
        <path id="l7" d="M1625,1524V1300" />
        <path id="l8" d="M825,1530 842,1400" />
        <path id="l9" d="M110,155 275,24" />
        <path id="l10" d="M855,42 1140,88" />
        <path id="l11" d="M0,838 70,916" />
      </defs>
      <rect x="0" y="0" width="2300" height="1600" fill="#f2efe9" />

      <g transform={OFFSET.b}>
        <path d="M1140,340 1125,345 1000,440 935,480 915,540 912,1290H1140Z" fill="#dfdfdf" />
        <path d="M90,15H510L480,155 430,163 88,75Z" fill="#aedfa3" />
        <path d="M115,15H490L465,130 430,145 110,55Z" fill="#c8facc" />
        <path d="M225,21h50l-20,28Z" fill="#aae0cb" />
        <path d="M440,60 470,21 480,45 460,75ZM165,65 180,60 185,75 168,82Z" fill="#d9d0c9" stroke="#c6b5a8" />
        <path d="M130,415 225,430 205,540 110,512ZM240,375 275,380V360L333,366 325,595 190,590 215,465 240,470Z" fill="#ffffe0" stroke="#e5e3b5" strokeWidth="2" />
        <path d="M190,360 240,370 235,430 180,415ZM245,400H268V460H243Z" fill="#e3e2e4" />
        <path d="M237,538h75v55h-75Z" fill="#aae0cb" stroke="#8fcab2" />
        <path d="M340,457h32v36h-32Z" fill="#c8facc" />
        <path d="M945,810h150l5,160H945Z" fill="#c6c7b1" />
      </g>
      <path d="M510,824 662,860 637,955 485,920Z" fill="#ffffe0" stroke="#efecb8" strokeWidth="2" />
      <path d="M510,1105 570,1115 555,1180 500,1167Z" fill="#c8f0d0" stroke="#8fd0a0" strokeWidth="3" />
      <path d="M360,792 395,797 388,835Z" fill="#c8f0d0" stroke="#8fd0a0" strokeWidth="3" />
      <path d="M475,30 500,25 498,65 472,60Z" fill="#c8f0d0" stroke="#8fd0a0" strokeWidth="3" />

      <g stroke="#fb8f84" strokeDasharray="9 8">
        {['taras', 'volod', 'mykil', 'pank'].map((k) => <path key={k} d={ROADS[k]} {...halo(66)} />)}
        {['saks', 'tolst', 'tolst2'].map((k) => <path key={k} d={ROADS[k]} {...halo(72)} />)}
        <path d={ROADS.vasyl} {...halo(94)} />
        <path d="M1615,1300V1525" {...halo(68)} />
        <path d="M1625,210 1675,21" {...halo(60)} />
      </g>
      <g stroke="#f2efe9">
        {['taras', 'volod', 'mykil', 'pank'].map((k) => <path key={k} d={ROADS[k]} {...halo(57)} />)}
        {['saks', 'tolst', 'tolst2'].map((k) => <path key={k} d={ROADS[k]} {...halo(63)} />)}
        <path d={ROADS.vasyl} {...halo(85)} />
        <path d="M1615,1300V1525" {...halo(59)} />
        <path d="M1625,210 1675,21" {...halo(51)} />
      </g>

      {tiles.map((t) => (
        <g key={t} transform={OFFSET[t]} fill="#d9d0c9" stroke="#c4b5a9" strokeWidth="3" strokeLinejoin="round">
          {polys(t)}
          {BUILDINGS[`${t}Rail`] && polys(`${t}Rail`)}
        </g>
      ))}
      <ellipse cx="175" cy="1395" rx="27" ry="42" fill="#d9d0c9" stroke="#c4b5a9" strokeWidth="3" />
      <path d="M1950,160h32l-5,50h-32Z" fill="#f2efe9" stroke="#c4b5a9" strokeWidth="3" />
      <path d="M1765,80h10l-18,95h-18l10-60Z" fill="#ffffe0" />
      <path d="M145,495 215,468 235,515 180,548Z" fill="#aae0cb" stroke="#4e9a6a" strokeWidth="3" />
      <path d="M180,485 215,468 235,515 200,530Z" fill="#c8facc" />
      <path d="M595,548 800,602 770,743 560,680Z" fill="#ff9a9a" fillOpacity=".22" stroke="#f5a09b" strokeWidth="4" />
      <path d="M595,548 800,602 770,743 560,680Z" fill="url(#hatch)" fillOpacity=".6" />

      {tiles.map((t) => (
        <g key={t} transform={OFFSET[t]} fill="none" strokeLinejoin="round" strokeLinecap="round">
          <path d={PATHS[t]} stroke="#fb8577" strokeWidth="4.500" strokeDasharray="6 9" />
          <path d={SERVICE[t]} stroke="#cbc9c6" strokeWidth="13" />
          <path d={SERVICE[t]} stroke="#fff" strokeWidth="9" />
        </g>
      ))}

      <g fill="none" stroke="#8b8b8b" strokeWidth="6" strokeDasharray="20 14">
        <path d="M2230,390C2180,520 2165,650 2158,780 2160,950 2205,1100 2205,1520" />
        <path d="M2265,545C2230,640 2228,780 2235,900L2270,1080" />
      </g>

      <g fill="none" strokeLinejoin="round">
        <g stroke="#c2c0bd">
          <path d={ROADS.pank} strokeWidth="30" />
          <path d={ROADS.mykil} strokeWidth="34" />
          <path d={ROADS.taras} strokeWidth="42" />
          <path d={ROADS.volod} strokeWidth="40" />
          <path d="M1625,210 1675,10M2005,320 2085,10" strokeWidth="38" />
        </g>
        <path d="M1579,190H1664V960L1655,1030 1642,1290H1579Z" fill="#fff" stroke="#c9c7c4" strokeWidth="3" />
        <g stroke="#fff">
          <path d={ROADS.pank} strokeWidth="25" />
          <path d={ROADS.mykil} strokeWidth="29" />
          <path d={ROADS.volod} strokeWidth="35" />
          <path d="M1625,210 1675,10M2005,320 2085,10" strokeWidth="33" />
        </g>
        <path d="M105,175 288,22" stroke="#a5d3a3" strokeWidth="9" />
        <path d="M85,218 120,270" stroke="#a5a4a3" strokeWidth="22" strokeDasharray="20 14" />
        <path d="M396,702 450,718" stroke="#a5a4a3" strokeWidth="20" strokeDasharray="16 26" />

        <path d="M1180,10 1170,90" stroke="#a4a660" strokeWidth="37" />
        <path d={ROADS.tolst} stroke="#a4a660" strokeWidth="39" />
        <path d="M1588,178 1625,200 2020,300 2170,345 2120,400 2015,350 1650,250 1605,235Z" fill="#f5f8bb" stroke="#a4a660" strokeWidth="3" />
        <path d="M2010,335V500" stroke="#a4a660" strokeWidth="36" />
        <path d="M2030,1300H2280" stroke="#a4a660" strokeWidth="31" />
        <path d="M1180,10 1170,90" stroke="#f5f8bb" strokeWidth="32" />
        <path d={ROADS.tolst} stroke="#f5f8bb" strokeWidth="34" />
        <path d="M2010,325V500" stroke="#f5f8bb" strokeWidth="31" />
        <path d="M2030,1300H2280" stroke="#f5f8bb" strokeWidth="26" />
        <path d="M2035,352 2070,350 2110,375 2085,390 2040,385Z" fill="#dfe5cc" stroke="#c4b5a9" strokeWidth="2" />

        <g stroke="#b88a4c">
          <path d={ROADS.saks} strokeWidth="40" />
          <path d={ROADS.vasyl} strokeWidth="60" />
          <path d="M1613,1300V1525" strokeWidth="40" />
        </g>
        <g stroke="#fcd6a4">
          <path d={ROADS.saks} strokeWidth="35" />
          <path d={ROADS.vasyl} strokeWidth="55" />
          <path d="M1613,1300V1525" strokeWidth="35" />
        </g>
        <path d={ROADS.taras} stroke="#fff" strokeWidth="37" />
        <path d="M1579,1230h65l-12,52h-40Z" fill="#fff" />
        <path d="M1619,240V900" stroke="#c3e3cb" strokeWidth="9" />
        <path d="M1619,240V1180" stroke="#fb8577" strokeOpacity=".75" strokeWidth="4" strokeDasharray="9 8" />
        <path d="M1660,240V980L1652,1250" stroke="#fb8577" strokeWidth="4" strokeDasharray="9 8" />
        <path d="M1140,88 1300,120 1630,200 1960,295 2015,320 2060,380 2160,380 2270,315M2060,400 2030,500V560M2032,1130V1290" stroke="#b77bab" strokeOpacity=".65" strokeWidth="5" strokeDasharray="17 9" />
      </g>

      <g fontFamily="Noto Sans, Open Sans, sans-serif" fontSize="36" fill="#222" stroke="#fff" strokeOpacity=".75" strokeWidth="5" paintOrder="stroke">
        <text><textPath href="#l1" textLength="490">Микільсько-Ботанічна вулиця</textPath></text>
        <text><textPath href="#l2" textLength="312">Тарасівська вулиця</textPath></text>
        <text><textPath href="#l3" textLength="392">Володимирська вулиця</textPath></text>
        <text><textPath href="#l4" textLength="332">Антоновича вулиця</textPath></text>
        <text><textPath href="#l9" textLength="205">Паньківська</textPath></text>
        <text><textPath href="#l8" textLength="125">вулиця</textPath></text>
      </g>
      <g fontFamily="Noto Sans, Open Sans, sans-serif" fontSize="36" fill="#2a2217">
        <text><textPath href="#l7" textLength="208">ича вулиця</textPath></text>
        <text><textPath href="#l5" textLength="543">Велика Васильківська вулиця</textPath></text>
        <text><textPath href="#l6">Велика Васи</textPath></text>
        <text><textPath href="#l10" textLength="280">лстого вулиця</textPath></text>
        <text><textPath href="#l11" textLength="95">лиця</textPath></text>
        <text x="1028" y="1310" textLength="422">Саксаганського вулиця</text>
      </g>

      <OneWay x={25} y={80} r={68} />
      <OneWay x={681} y={52} r={-82} />
      <OneWay x={522} y={642} r={-78} />
      <OneWay x={332} y={1358} r={-82} />
      <OneWay x={1097} y={415} r={95} />
      <OneWay x={924} y={1078} r={100} />
      <OneWay x={854} y={1350} r={95} />
      <OneWay x={1596} y={538} r={90} />
      <OneWay x={1640} y={790} r={-90} />
      <OneWay x={1637} y={965} r={-90} />
      <OneWay x={1604} y={1275} r={68} />
      <g>
        <OneWay x={96} y={935} r={225} c="#5c3d05" />
        <OneWay x={545} y={1205} r={190} c="#5c3d05" />
        <OneWay x={1500} y={1298} r={180} c="#5c3d05" />
        <OneWay x={1687} y={1298} r={180} c="#5c3d05" />
        <OneWay x={1678} y={211} r={190} c="#4d4a05" />
        <OneWay x={1968} y={310} r={8} c="#4d4a05" />
        <OneWay x={2012} y={543} r={90} c="#5c3d05" />
        <OneWay x={2034} y={1155} r={-90} c="#5c3d05" />
      </g>

      <Book x={727} y={517} />
      <Book x={1526} y={266} />
      <Book x={1657} y={1173} />
      <path d="M572,124C556,140 560,160 576,172 570,160 574,152 584,148 582,158 588,162 582,172 598,168 604,152 596,138 592,144 590,148 586,148 588,138 582,130 578,132 580,142 574,146 570,150 566,142 568,132 572,124Z" fill="#734a08" stroke="#734a08" strokeWidth="3" />
      <g fill="#734a08">
        <path d="M918,1250 941,1236 964,1250V1256H918ZM922,1260h7v16h-7ZM937,1260h8v16h-8ZM953,1260h7v16h-7ZM917,1277h48v5h-48Z" />
      </g>
      <path d="M1152,1420 1173,1403 1195,1420M1160,1415V1440M1187,1415V1440" fill="none" stroke="#555" strokeWidth="5" />
      <path d="M1148,1396H1200M1154,1402H1194" fill="none" stroke="#888" strokeWidth="3" strokeDasharray="4 5" />
      <g fill="#0092da">
        <path d="M585,1218h23v22h-23ZM1913,1284h22v22h-22ZM2115,411h23v22h-23ZM1991,632h22v22h-22Z" />
      </g>
      <circle cx="1732" cy="156" r="27" fill="#c1000e" />
      <path d="M1732,140V172M1716,156H1748" stroke="#fff" strokeWidth="7" />

      <path d="M1172,88 1095,425 1000,785 870,1305" fill="none" stroke="#5fcaca" strokeWidth="9" />
      <circle cx="869" cy="1303" r="23" fill="#fff" fillOpacity=".3" stroke="#5fcaca" strokeWidth="7" />

      <circle cx="2234" cy="177" r="34" fill="#02018c" />
      <path d="M2236,158V196M2217,177H2255" stroke="#fff" strokeWidth="8" />

      <g transform={OFFSET.b} strokeWidth="3">
        <rect x="800" y="41" width="87" height="78" rx="9" fill="#e9e8e4" stroke="#a9a8a5" />
        <path d="M813,86 832,56 873,71 865,100" fill="none" stroke="#b5b5b5" strokeWidth="2" />
        <path d="M813,86 832,108 873,71" fill="none" stroke="#e05a5a" strokeWidth="2" />
        <rect x="911" y="41" width="85" height="78" rx="9" fill="#eebc2b" stroke="#d6a725" />
        <path d="M923,86 942,56 983,71 975,100" fill="none" stroke="#6d5a20" strokeWidth="2" />
        <rect x="1019" y="41" width="86" height="78" rx="9" fill="#e4e2de" stroke="#a9a8a5" />
        <g fill="#000" stroke="none">
          {[[813, 86], [832, 56], [873, 71], [865, 100], [832, 108], [923, 86], [942, 56], [983, 71], [975, 100]].map(([x, y]) => (
            <circle key={`${x}-${y}`} cx={x} cy={y} r="5" />
          ))}
        </g>
        <path d="M1050,108 1047,95 1033,80 1036,74 1047,80 1040,60 1046,57 1055,73 1055,53 1062,52 1065,71 1072,54 1078,56 1077,74 1086,63 1090,67 1082,95 1080,108Z" fill="#fff" stroke="#333" />
        <path d="M1060,108 1060,98M1068,108V98M1075,108 1077,90" stroke="#777" strokeWidth="3" />
      </g>
    </svg>
  );
}

function MapWidget() {
  return (
    <div className="relative h-[500px] w-[750px] overflow-hidden bg-[#f2efe9]">
      <CityMap />
      <div className="absolute top-[10px] left-[11px] flex w-[33px] flex-col gap-px rounded-[5px] bg-white/40 p-[3px] text-white">
        <button className="flex h-7 items-center justify-center rounded-t-[3px] bg-[#003c88]/50">
          <Svg s={18} vb="0 0 18 18" className="mt-[-3px]"><path d="M9 1.500v15M1.500 9h15" stroke="#fff" strokeWidth="3" /></Svg>
        </button>
        <button className="flex h-7 items-center justify-center rounded-b-[3px] bg-[#003c88]/50">
          <Svg s={18} vb="0 0 18 18"><path d="M2 7.500h14" stroke="#fff" strokeWidth="3" /></Svg>
        </button>
      </div>
      <div className="absolute right-1 bottom-0 text-right text-[13.500px] leading-5 text-[#333]">
        <div>
          © <span className="text-[#447e9b]">OpenStreetMap</span> contributors
        </div>
        <div>Scale = 1 : 6771</div>
        <div className="mt-[21px] h-[18px]">3396289.45314, 6522118.87288</div>
      </div>
    </div>
  );
}

/* ------------------------------------------------------------- admin form */

function SelectRow({ label }) {
  return (
    <div className="flex h-[66.300px] items-start border-b border-[#eee] pt-[12.500px] pl-[12.500px]">
      <span className="w-[212.500px] pt-[9px] text-[16.250px] leading-6 text-[#666]">{label}</span>
      <div className="flex h-[37.500px] w-[86px] items-center rounded-[5px] border border-[#ccc] pl-[13px] text-black">
        <span className="w-[40px] pt-px font-['Liberation_Sans',sans-serif] text-[13.300px] leading-none">---------</span>
        <Svg s={8} vb="0 0 8 8" className="ml-[15px]">
          <path d="M.500 0h7L4 7.500Z" fill="#000" />
        </Svg>
      </div>
      <div className="flex items-center pt-[13px] pl-[12px]">
        <Svg s={16} vb="0 0 16 16">
          <path d="m1 15 1-5 8-8 4 4-8 8ZM11 1l2-1 3 3-1 2Z" fill="#f9e7b0" />
          <path d="m4 10 6-6M6 12l6-6" stroke="#fdf5dc" />
        </Svg>
        <Svg s={14} vb="0 0 14 14" className="ml-[10px]">
          <path d="M7 .500v13M.500 7h13" stroke="#83c748" strokeWidth="3.800" />
        </Svg>
        <Svg s={14} vb="0 0 14 14" className="ml-[12px]">
          <path d="m2 2 10 10M12 2 2 12" stroke="#f3c3c3" strokeWidth="4" />
        </Svg>
      </div>
    </div>
  );
}

const ModuleHeader = ({ children, className = '' }) => (
  <div className={`flex h-[39px] items-center bg-[#79aec8] pl-[10px] text-white ${className}`}>{children}</div>
);

function Page() {
  return (
    <div className="flex h-[905px] overflow-hidden bg-white font-[Roboto,sans-serif]">
      <div className="ml-[50px] flex w-[1799px] flex-col">
        <div className="mt-[-1px]">
          <SelectRow label="District:" />
          <SelectRow label="Geom type:" />
          <SelectRow label="Tract mtz:" />
        </div>
        <ModuleHeader className="mt-[37px] pt-[2px] text-[16.250px]">Геометрія</ModuleHeader>
        <div className="flex h-[545px] shrink-0 border-b border-[#eee] pt-[13px] pl-[12.500px]">
          <span className="w-[212.500px] pt-[8px] text-[16.250px] leading-6 font-bold text-[#333]">Geom:</span>
          <div>
            <MapWidget />
            <div className="text-[16.250px] leading-[19px] text-[#447e9b]">Видалити всі Features</div>
          </div>
        </div>
        <ModuleHeader className="mt-[38px] text-[15px] font-medium tracking-[0.500px]">ЗВ'ЯЗКИ МІЖ ВУЛИЦЯМИ ТА СЕГМЕНТАМИ</ModuleHeader>
        <div className="h-[10px] bg-[#f6f6f6]" />
      </div>
      <div className="ml-[50px] flex w-[21px] flex-col items-center bg-[#f1f1f1] pt-[7px]">
        <Svg s={9} vb="0 0 9 5"><path d="M0 5 4.500 0 9 5Z" fill="#505050" /></Svg>
        <div className="mt-[255px] h-[453px] w-[17px] bg-[#c1c1c1]" />
        <Svg s={9} vb="0 0 9 5" className="mt-[165px]"><path d="M0 0h9L4.500 5Z" fill="#505050" /></Svg>
      </div>
    </div>
  );
}

export default function App() {
  return (
    <div className="h-[1080px] w-[1920px] overflow-hidden bg-white">
      <Taskbar />
      <TabStrip />
      <Toolbar />
      <Bookmarks />
      <Page />
    </div>
  );
}
